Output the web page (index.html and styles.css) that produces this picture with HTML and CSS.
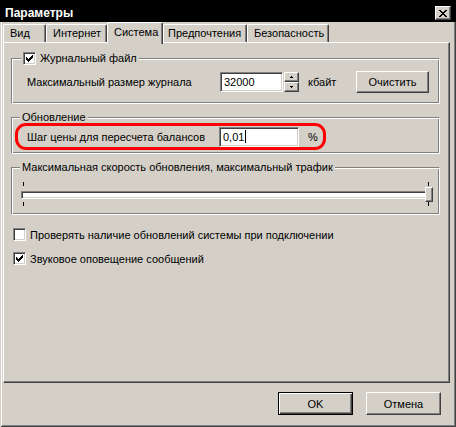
FILE: index.html
```html
<!DOCTYPE html>
<html lang="ru">
<head>
    <meta charset="UTF-8">
    <title>Параметры</title>
    <link rel="stylesheet" href="styles.css">
</head>
<body>
    <div class="window">
        <div class="titlebar">
            <span class="title">Параметры</span>
            <span class="close">
                <svg width="8" height="7" viewBox="0 0 8 7" shape-rendering="crispEdges">
                    <path d="M0 0h2v1h-2z M6 0h2v1h-2z M1 1h2v1h-2z M5 1h2v1h-2z M2 2h4v1h-4z M3 3h2v1h-2z M2 4h4v1h-4z M1 5h2v1h-2z M5 5h2v1h-2z M0 6h2v1h-2z M6 6h2v1h-2z" fill="#000"/>
                </svg>
            </span>
        </div>

        <div class="tabs">
            <div class="tab tab-view">Вид</div>
            <div class="tab tab-net">Интернет</div>
            <div class="tab tab-system active">Система</div>
            <div class="tab tab-prefs">Предпочтения</div>
            <div class="tab tab-security">Безопасность</div>
        </div>

        <div class="panel">
            <div class="group group-log">
                <div class="legend legend-check">
                    <span class="check">
                        <svg width="9" height="9" viewBox="0 0 9 9" shape-rendering="crispEdges"><path d="M7 1h1v1h-1z M6 2h2v1h-2z M1 3h1v1h-1z M5 3h3v1h-3z M1 4h2v1h-2z M4 4h3v1h-3z M1 5h5v1h-5z M2 6h3v1h-3z M3 7h1v1h-1z" fill="#000"/></svg>
                    </span>
                    <span>Журнальный файл</span>
                </div>
                <div class="row">
                    <span class="label label-size">Максимальный размер журнала</span>
                    <span class="field field-size">32000</span>
                    <span class="spin">
                        <span class="spin-btn"><svg width="5" height="3" viewBox="0 0 5 3" shape-rendering="crispEdges"><path d="M2 0h1v1h-1z M1 1h3v1h-3z" fill="#000"/></svg></span>
                        <span class="spin-btn"><svg width="5" height="3" viewBox="0 0 5 3" shape-rendering="crispEdges"><path d="M1 0h3v1h-3z M2 1h1v1h-1z" fill="#000"/></svg></span>
                    </span>
                    <span class="unit">кбайт</span>
                    <button type="button" class="button btn-clear">Очистить</button>
                </div>
            </div>

            <div class="group group-update">
                <div class="legend">Обновление</div>
                <div class="highlight">
                    <span class="label label-step">Шаг цены для пересчета балансов</span>
                    <span class="field field-step">0,01<span class="caret"></span></span>
                    <span class="unit">%</span>
                </div>
            </div>

            <div class="group group-speed">
                <div class="legend">Максимальная скорость обновления, максимальный трафик</div>
                <div class="slider">
                    <div class="ticks"><span class="tick"></span><span class="tick"></span></div>
                    <div class="track"><span class="thumb"></span></div>
                    <div class="ticks ticks-bottom"><span class="tick"></span><span class="tick"></span></div>
                </div>
            </div>

            <div class="option option-first">
                <span class="check"></span>
                <span>Проверять наличие обновлений системы при подключении</span>
            </div>
            <div class="option">
                <span class="check">
                    <svg width="9" height="9" viewBox="0 0 9 9" shape-rendering="crispEdges"><path d="M7 1h1v1h-1z M6 2h2v1h-2z M1 3h1v1h-1z M5 3h3v1h-3z M1 4h2v1h-2z M4 4h3v1h-3z M1 5h5v1h-5z M2 6h3v1h-3z M3 7h1v1h-1z" fill="#000"/></svg>
                </span>
                <span>Звуковое оповещение сообщений</span>
            </div>
        </div>

        <div class="actions">
            <button type="button" class="button btn-dialog default">OK</button>
            <button type="button" class="button btn-dialog">Отмена</button>
        </div>
    </div>
</body>
</html>
```

FILE: styles.css
```css
* {
    box-sizing: border-box;
}

body {
    margin: 0;
    font-family: "Liberation Sans", Arial, sans-serif;
    font-size: 11px;
    color: #000;
    background-color: #d4d0c8;
}

.window {
    width: 456px;
    height: 427px;
    display: flex;
    flex-direction: column;
    background-color: #d4d0c8;
    box-shadow: inset 1px 0 #d4d0c8, inset -1px -1px #404040, inset 2px 0 #fff, inset -2px -2px #808080;
}

/* title bar */
.titlebar {
    height: 22px;
    flex-shrink: 0;
    display: flex;
    align-items: center;
    justify-content: space-between;
    padding: 3px 5px 0 5px;
    background-color: #000;
    color: #fff;
    font-weight: bold;
    font-size: 12px;
}

.close {
    width: 16px;
    height: 14px;
    display: flex;
    align-items: center;
    justify-content: center;
    margin-top: 1px;
    background-color: #d4d0c8;
    border: 1px solid;
    border-color: #fff #404040 #404040 #fff;
    box-shadow: inset -1px -1px #808080;
}

/* tabs */
.tabs {
    height: 20px;
    flex-shrink: 0;
    display: flex;
    align-items: flex-end;
    padding-left: 3px;
}

.tab {
    height: 18px;
    padding-left: 6px;
    border: 1px solid;
    border-color: #fff #404040 transparent #fff;
    border-bottom: 0;
    border-radius: 2px 2px 0 0;
    box-shadow: inset -1px 0 #808080;
    line-height: 17px;
    white-space: nowrap;
}

.tab-view { width: 43px; }
.tab-net { width: 61px; }
.tab-system { width: 56px; }
.tab-prefs { width: 84px; padding-left: 4px; }
.tab-security { width: 82px; }

.tab.active {
    height: 22px;
    margin-bottom: -2px;
    position: relative;
    z-index: 1;
    background-color: #d4d0c8;
    line-height: 19px;
}

/* tab page */
.panel {
    flex: 1;
    margin: 0 6px 0 3px;
    padding: 0 9px 0 7px;
    border: 1px solid;
    border-color: #fff #404040 #404040 #fff;
    box-shadow: inset -1px -1px #808080;
}

.group {
    border: 1px solid;
    border-color: #808080 #fff #fff #808080;
    box-shadow: inset 1px 1px #fff, inset -1px -1px #808080;
}

.legend {
    display: flex;
    align-items: center;
    width: max-content;
    height: 13px;
    margin: -7px 0 0 8px;
    padding: 0 2px;
    line-height: 13px;
    background-color: #d4d0c8;
}

.legend-check {
    margin-left: 9px;
    padding-left: 2px;
    gap: 4px;
}

.group-log {
    margin-top: 15px;
    padding-bottom: 10px;
}

.group-update {
    margin-top: 13px;
    padding-bottom: 3px;
}

.group-speed {
    margin-top: 13px;
    padding-bottom: 8px;
}

.row {
    display: flex;
    align-items: center;
    height: 22px;
    margin: 6px 0 0 15px;
}

.label-size { width: 193px; }
.label-step { width: 192px; }

.field {
    height: 20px;
    padding: 0 3px;
    display: flex;
    align-items: center;
    background-color: #fff;
    border: 1px solid;
    border-color: #808080 #fff #fff #808080;
    box-shadow: inset 1px 1px #404040, inset -1px -1px #d4d0c8;
}

.field-size { width: 63px; }
.field-step { width: 80px; }

.caret {
    width: 1px;
    height: 13px;
    margin-left: 1px;
    background-color: #000;
}

.spin {
    display: flex;
    flex-direction: column;
    margin-left: 1px;
}

.spin-btn {
    width: 15px;
    height: 10px;
    display: flex;
    align-items: center;
    justify-content: center;
    border: 1px solid;
    border-color: #fff #404040 #404040 #fff;
    box-shadow: inset -1px -1px #808080;
}

.unit {
    width: 48px;
    margin-left: 9px;
}

.button {
    height: 22px;
    padding: 0;
    font-family: inherit;
    font-size: 11px;
    color: #000;
    background-color: #d4d0c8;
    border: 1px solid;
    border-color: #fff #404040 #404040 #fff;
    box-shadow: inset -1px -1px #808080;
}

.btn-clear { width: 73px; }

/* red annotation round the price step */
.highlight {
    display: flex;
    align-items: center;
    width: 311px;
    height: 27px;
    margin: -1px 0 0 3px;
    padding-left: 9px;
    border: 3px solid #f00;
    border-radius: 11px;
}

.highlight .unit {
    width: auto;
}

/* trackbar */
.slider {
    width: 413px;
    margin: 8px 0 0 8px;
    display: flex;
    flex-direction: column;
}

.ticks {
    height: 4px;
    display: flex;
    justify-content: space-between;
    padding: 0 4px 0 3px;
}

.ticks-bottom {
    margin-top: 3px;
}

.tick {
    width: 1px;
    height: 4px;
    background-color: #000;
}

.track {
    position: relative;
    width: 408px;
    height: 8px;
    margin: 5px 0 0 1px;
    background-color: #fff;
    border: 1px solid;
    border-color: #808080 #fff #fff #808080;
    box-shadow: inset 1px 1px #404040, inset -1px -1px #d4d0c8;
}

.thumb {
    position: absolute;
    top: -5px;
    right: -5px;
    width: 8px;
    height: 15px;
    background-color: #d4d0c8;
    border: 1px solid;
    border-color: #fff #404040 #404040 #fff;
    box-shadow: inset -1px -1px #808080;
}

/* check boxes */
.check {
    width: 13px;
    height: 13px;
    flex-shrink: 0;
    display: flex;
    align-items: center;
    justify-content: center;
    background-color: #fff;
    border: 1px solid;
    border-color: #808080 #fff #fff #808080;
    box-shadow: inset 1px 1px #404040, inset -1px -1px #d4d0c8;
}

.check svg {
    display: block;
}

.option {
    display: flex;
    align-items: center;
    gap: 4px;
    height: 13px;
    margin: 11px 0 0 2px;
}

.option-first {
    margin-top: 13px;
}

/* dialog buttons */
.actions {
    height: 44px;
    flex-shrink: 0;
    display: flex;
    justify-content: flex-end;
    gap: 13px;
    padding: 9px 15px 0 0;
}

.btn-dialog {
    width: 75px;
    height: 23px;
}

.btn-dialog.default {
    border-color: #000;
    box-shadow: inset 1px 1px #fff, inset -1px -1px #404040, inset -2px -2px #808080;
}
```
